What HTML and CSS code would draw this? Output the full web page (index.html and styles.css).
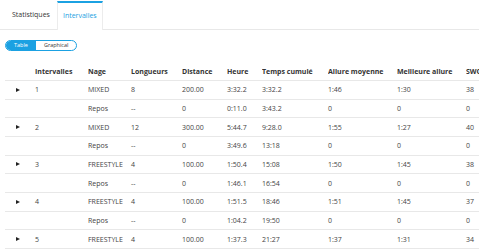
FILE: index.html
```html
<!DOCTYPE html>
<html lang="fr">
<head>
  <meta charset="UTF-8" />
  <title>Intervalles</title>
  <link rel="stylesheet" href="styles.css">
</head>
<body>
  <div class="page">
    <div class="tabs">
      <div class="tab">Statistiques</div>
      <div class="tab active">Intervalles</div>
    </div>

    <div class="toggle">
      <span class="toggle-btn on">Table</span>
      <span class="toggle-btn">Graphical</span>
    </div>

    <div class="table-wrap">
      <table class="laps">
        <thead>
          <tr>
            <th class="c-arrow"></th>
            <th class="c-int">Intervalles</th>
            <th class="c-nage">Nage</th>
            <th class="c-long">Longueurs</th>
            <th class="c-dist">Distance</th>
            <th class="c-heure">Heure</th>
            <th class="c-cum">Temps cumulé</th>
            <th class="c-moy">Allure moyenne</th>
            <th class="c-best">Meilleure allure</th>
            <th class="c-swolf">SWOLF</th>
          </tr>
        </thead>
        <tbody id="rows"></tbody>
      </table>
    </div>
  </div>

  <script>
    const laps = [
      ["1", "MIXED", "8", "200.00", "3:32.2", "3:32.2", "1:46", "1:30", "38"],
      ["", "Repos", "--", "0", "0:11.0", "3:43.2", "0", "0", "0"],
      ["2", "MIXED", "12", "300.00", "5:44.7", "9:28.0", "1:55", "1:27", "40"],
      ["", "Repos", "--", "0", "3:49.6", "13:18", "0", "0", "0"],
      ["3", "FREESTYLE", "4", "100.00", "1:50.4", "15:08", "1:50", "1:45", "38"],
      ["", "Repos", "--", "0", "1:46.1", "16:54", "0", "0", "0"],
      ["4", "FREESTYLE", "4", "100.00", "1:51.5", "18:46", "1:51", "1:45", "37"],
      ["", "Repos", "--", "0", "1:04.2", "19:50", "0", "0", "0"],
      ["5", "FREESTYLE", "4", "100.00", "1:37.3", "21:27", "1:37", "1:31", "34"]
    ];

    const body = document.getElementById("rows");
    laps.forEach(lap => {
      const tr = document.createElement("tr");
      const arrow = lap[0] ? '<span class="arrow"></span>' : "";
      tr.innerHTML = `<td class="c-arrow">${arrow}</td>` +
        lap.map(v => `<td>${v}</td>`).join("");
      body.appendChild(tr);
    });
  </script>
</body>
</html>
```

FILE: styles.css
```css
body {
  margin: 0;
  background: #fff;
  font-family: 'Open Sans', sans-serif;
  font-size: 7px;
  color: #444;
}

.page {
  width: 479px;
  overflow: hidden;
  padding-top: 1px;
}

.tabs {
  display: flex;
  border-bottom: 1px solid #e8e8e8;
  height: 28px;
  padding-left: 5px;
}

.tab {
  padding: 0 7px;
  line-height: 28px;
  font-size: 7px;
  color: #333;
}

.tab.active {
  color: #1ba1e2;
  background: #fff;
  border-top: 2px solid #1ba1e2;
  border-left: 1px solid #ececec;
  border-right: 1px solid #ececec;
  line-height: 26px;
  height: 27px;
  margin-bottom: -1px;
  padding: 0 5px;
}

.toggle {
  display: inline-flex;
  margin: 10px 0 0 5px;
  border: 1px solid #1ba1e2;
  border-radius: 6px;
  overflow: hidden;
  height: 9px;
}

.toggle-btn {
  font-size: 5.5px;
  line-height: 9px;
  padding: 0 8px 0 8px;
  color: #333;
}

.toggle-btn.on {
  background: #1ba1e2;
  color: #fff;
  padding: 0 8px 0 8px;
}

.table-wrap {
  margin: 12px 0 0 5px;
}

.laps {
  border-collapse: collapse;
  table-layout: fixed;
  width: 500px;
}

.laps th {
  font-weight: 700;
  color: #333;
  text-align: left;
  height: 17px;
  padding: 0;
  border-bottom: 1px solid #e8e8e8;
  white-space: nowrap;
  overflow: hidden;
}

.laps td {
  height: 17.67px;
  padding: 0;
  border-bottom: 1px solid #e8e8e8;
  white-space: nowrap;
  color: #444;
}

.c-arrow { width: 30px; }
.c-int { width: 53px; }
.c-nage { width: 43px; }
.c-long { width: 51px; }
.c-dist { width: 45px; }
.c-heure { width: 35px; }
.c-cum { width: 66px; }
.c-moy { width: 69px; }
.c-best { width: 69px; }
.c-swolf { width: 39px; }

.arrow {
  display: block;
  margin-left: 11px;
  width: 0;
  height: 0;
  border-top: 2.5px solid transparent;
  border-bottom: 2.5px solid transparent;
  border-left: 4px solid #222;
}
```
